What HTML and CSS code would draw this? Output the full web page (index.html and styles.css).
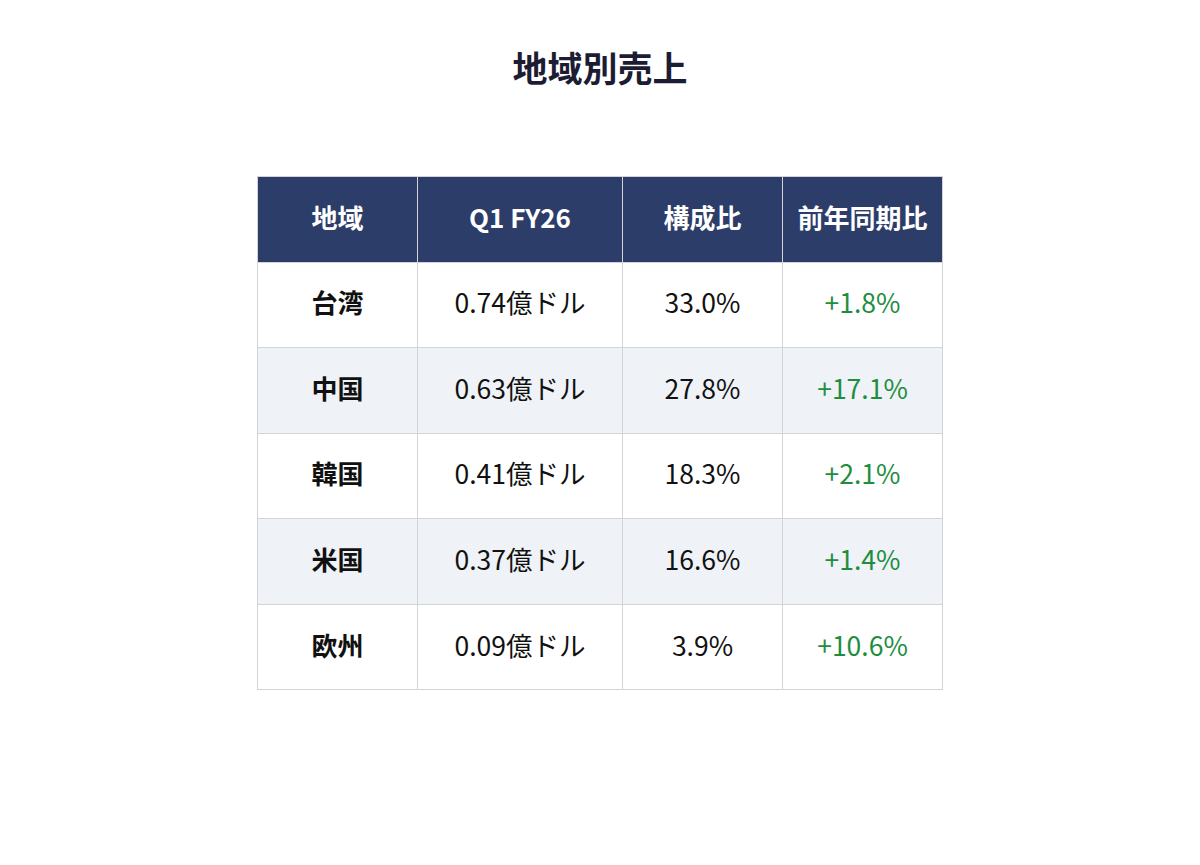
FILE: index.html
```html
<!DOCTYPE html>
<html lang="ja">
<head>
<meta charset="utf-8">
<link rel="stylesheet" href="styles.css">
</head>
<body>
<h1 class="title">地域別売上</h1>
<table class="sales">
  <colgroup>
    <col class="c1"><col class="c2"><col class="c3"><col class="c4">
  </colgroup>
  <thead>
    <tr><th>地域</th><th>Q1 FY26</th><th>構成比</th><th>前年同期比</th></tr>
  </thead>
  <tbody>
    <tr><td class="region">台湾</td><td>0.74億ドル</td><td>33.0%</td><td class="up">+1.8%</td></tr>
    <tr><td class="region">中国</td><td>0.63億ドル</td><td>27.8%</td><td class="up">+17.1%</td></tr>
    <tr><td class="region">韓国</td><td>0.41億ドル</td><td>18.3%</td><td class="up">+2.1%</td></tr>
    <tr><td class="region">米国</td><td>0.37億ドル</td><td>16.6%</td><td class="up">+1.4%</td></tr>
    <tr><td class="region">欧州</td><td>0.09億ドル</td><td>3.9%</td><td class="up">+10.6%</td></tr>
  </tbody>
</table>
</body>
</html>
```
FILE: styles.css
```css
html, body {
  margin: 0;
  padding: 0;
  background: #ffffff;
}
body {
  font-family: "Noto Sans CJK JP", "Noto Sans", sans-serif;
  color: #111111;
}
.title {
  margin: 46px 0 0;
  font-size: 35px;
  line-height: 42px;
  font-weight: 700;
  color: #1c1d33;
  text-align: center;
}
.sales {
  margin: 88px auto 0;
  border-collapse: collapse;
  table-layout: fixed;
  width: 685px;
}
.c1 { width: 160px; }
.c2 { width: 205px; }
.c3 { width: 160px; }
.c4 { width: 160px; }
.sales th,
.sales td {
  border: 1px solid #d2d4d8;
  text-align: center;
  padding: 0 0 6px;
}
.sales th {
  background: #2c3d6a;
  color: #ffffff;
  font-weight: 700;
  font-size: 26px;
  height: 78.5px;
}
.sales td {
  height: 78.6px;
  font-size: 26.5px;
  font-weight: 400;
}
.sales tbody tr:nth-child(even) td {
  background: #eff2f7;
}
.sales td.region {
  font-weight: 700;
  font-size: 26px;
}
.sales td.up {
  color: #1e8e3e;
}
```
